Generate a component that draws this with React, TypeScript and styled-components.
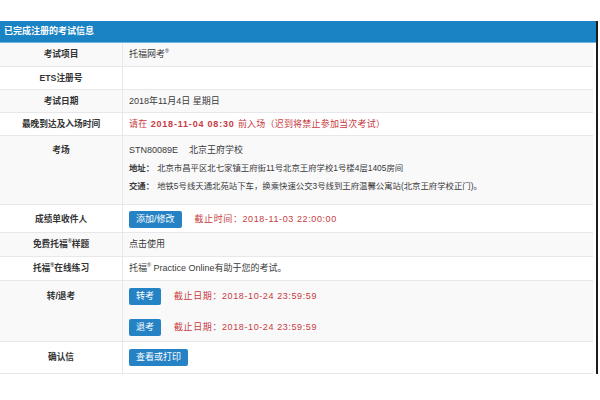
import { FC, ReactNode } from "react";
import styled, { createGlobalStyle } from "styled-components";

const GlobalStyle = createGlobalStyle`
  html, body {
    margin: 0;
    padding: 0;
    background: #fff;
  }
  body {
    font-family: "Liberation Sans", "Noto Sans CJK SC", sans-serif;
    font-size: 9px;
    color: #3a3a3a;
  }
`;

const Page = styled.div`
  padding-top: 21px;
`;

const Card = styled.div`
  width: 596px;
  border-right: 2px solid #1c1c1c;
`;

const Header = styled.div`
  height: 21px;
  line-height: 21px;
  padding-left: 4px;
  background: #1a83c4;
  border-bottom: 1px solid #6cb6e4;
  color: #fff;
  font-weight: bold;
  font-size: 9px;
`;

const Rows = styled.div`
  margin-right: 3px;
`;

const Row = styled.div<{ $striped: boolean; $h: number }>`
  display: grid;
  grid-template-columns: 123px 1fr;
  height: ${(p) => p.$h}px;
  box-sizing: border-box;
  border-bottom: 1px solid #e8e8ea;
  background: ${(p) => (p.$striped ? "#f9f9fa" : "#fff")};
`;

const Label = styled.div<{ $pt: number; $lh: number }>`
  border-right: 1px solid #e8e8ea;
  text-align: center;
  font-weight: bold;
  font-size: 8.7px;
  color: #333;
  padding-top: ${(p) => p.$pt}px;
  line-height: ${(p) => p.$lh}px;
`;

const Value = styled.div<{ $pt: number; $lh: number; $gap?: number }>`
  display: flex;
  flex-direction: column;
  gap: ${(p) => p.$gap ?? 0}px;
  padding-left: 6px;
  padding-top: ${(p) => p.$pt}px;
  line-height: ${(p) => p.$lh}px;
`;

const Line = styled.div<{ $size?: number }>`
  white-space: nowrap;
  font-size: ${(p) => p.$size ?? 9}px;
`;

const ButtonLine = styled.div`
  display: flex;
  align-items: center;
  white-space: nowrap;
`;

const Sup = styled.sup`
  font-size: 5.5px;
  line-height: 1;
  vertical-align: 4px;
`;

const Red = styled.span<{ $bold?: boolean }>`
  color: #c83a42;
  font-weight: ${(p) => (p.$bold ? "bold" : "normal")};
  letter-spacing: ${(p) => (p.$bold ? "0.8px" : "0.2px")};
`;

const Deadline = styled.span`
  color: #c83a42;
  margin-left: 13px;
  letter-spacing: 0.6px;
`;

const Strong = styled.span`
  font-weight: bold;
  margin-right: 3px;
`;

const Gap = styled.span<{ $w: number }>`
  display: inline-block;
  width: ${(p) => p.$w}px;
`;

const Button = styled.button`
  height: 17px;
  padding: 0 7px;
  border: none;
  border-radius: 2px;
  background: #2582c4;
  color: #fff;
  font-family: inherit;
  font-size: 9px;
  line-height: 17px;
  cursor: pointer;
`;

type RowProps = {
  label: ReactNode;
  index: number;
  h: number;
  pt?: number;
  lh?: number;
  gap?: number;
  children?: ReactNode;
};

const InfoRow: FC<RowProps> = ({ label, index, h, pt = 0, lh, gap, children }) => {
  const lineH = lh ?? h - 1;
  return (
    <Row $striped={index % 2 === 0} $h={h}>
      <Label $pt={pt} $lh={lineH}>
        {label}
      </Label>
      <Value $pt={pt} $lh={lineH} $gap={gap}>
        {children}
      </Value>
    </Row>
  );
};

export default function App() {
  return (
    <>
      <GlobalStyle />
      <Page>
        <Card>
          <Header>已完成注册的考试信息</Header>
          <Rows>
            <InfoRow index={0} h={24} label="考试项目">
              <Line>
                托福网考<Sup>®</Sup>
              </Line>
            </InfoRow>
            <InfoRow index={1} h={23} label="ETS注册号" />
            <InfoRow index={2} h={23} label="考试日期">
              <Line>2018年11月4日 星期日</Line>
            </InfoRow>
            <InfoRow index={3} h={23} label="最晚到达及入场时间">
              <Line>
                <Red>请在</Red>
                <Red $bold>&nbsp;2018-11-04 08:30&nbsp;</Red>
                <Red>前入场（迟到将禁止参加当次考试）</Red>
              </Line>
            </InfoRow>
            <InfoRow index={4} h={69} pt={5} lh={18} label="考场">
              <Line>
                STN80089E<Gap $w={11} />北京王府学校
              </Line>
              <Line $size={8.4}>
                <Strong>地址：</Strong>
                北京市昌平区北七家镇王府街11号北京王府学校1号楼4层1405房间
              </Line>
              <Line $size={8.4}>
                <Strong>交通：</Strong>
                地铁5号线天通北苑站下车，换乘快速公交3号线到王府温馨公寓站(北京王府学校正门)。
              </Line>
            </InfoRow>
            <InfoRow index={5} h={28} pt={6} lh={17} label="成绩单收件人">
              <ButtonLine>
                <Button>添加/修改</Button>
                <Deadline>截止时间：2018-11-03 22:00:00</Deadline>
              </ButtonLine>
            </InfoRow>
            <InfoRow
              index={6}
              h={24}
              label={
                <>
                  免费托福<Sup>®</Sup>样题
                </>
              }
            >
              <Line>点击使用</Line>
            </InfoRow>
            <InfoRow
              index={7}
              h={24}
              label={
                <>
                  托福<Sup>®</Sup>在线练习
                </>
              }
            >
              <Line>
                托福<Sup>®</Sup>&nbsp;Practice Online有助于您的考试。
              </Line>
            </InfoRow>
            <InfoRow index={8} h={61} pt={7} lh={17} gap={14} label="转/退考">
              <ButtonLine>
                <Button>转考</Button>
                <Deadline>截止日期：2018-10-24 23:59:59</Deadline>
              </ButtonLine>
              <ButtonLine>
                <Button>退考</Button>
                <Deadline>截止日期：2018-10-24 23:59:59</Deadline>
              </ButtonLine>
            </InfoRow>
            <InfoRow index={9} h={32} pt={7} lh={17} label="确认信">
              <ButtonLine>
                <Button>查看或打印</Button>
              </ButtonLine>
            </InfoRow>
          </Rows>
        </Card>
      </Page>
    </>
  );
}
